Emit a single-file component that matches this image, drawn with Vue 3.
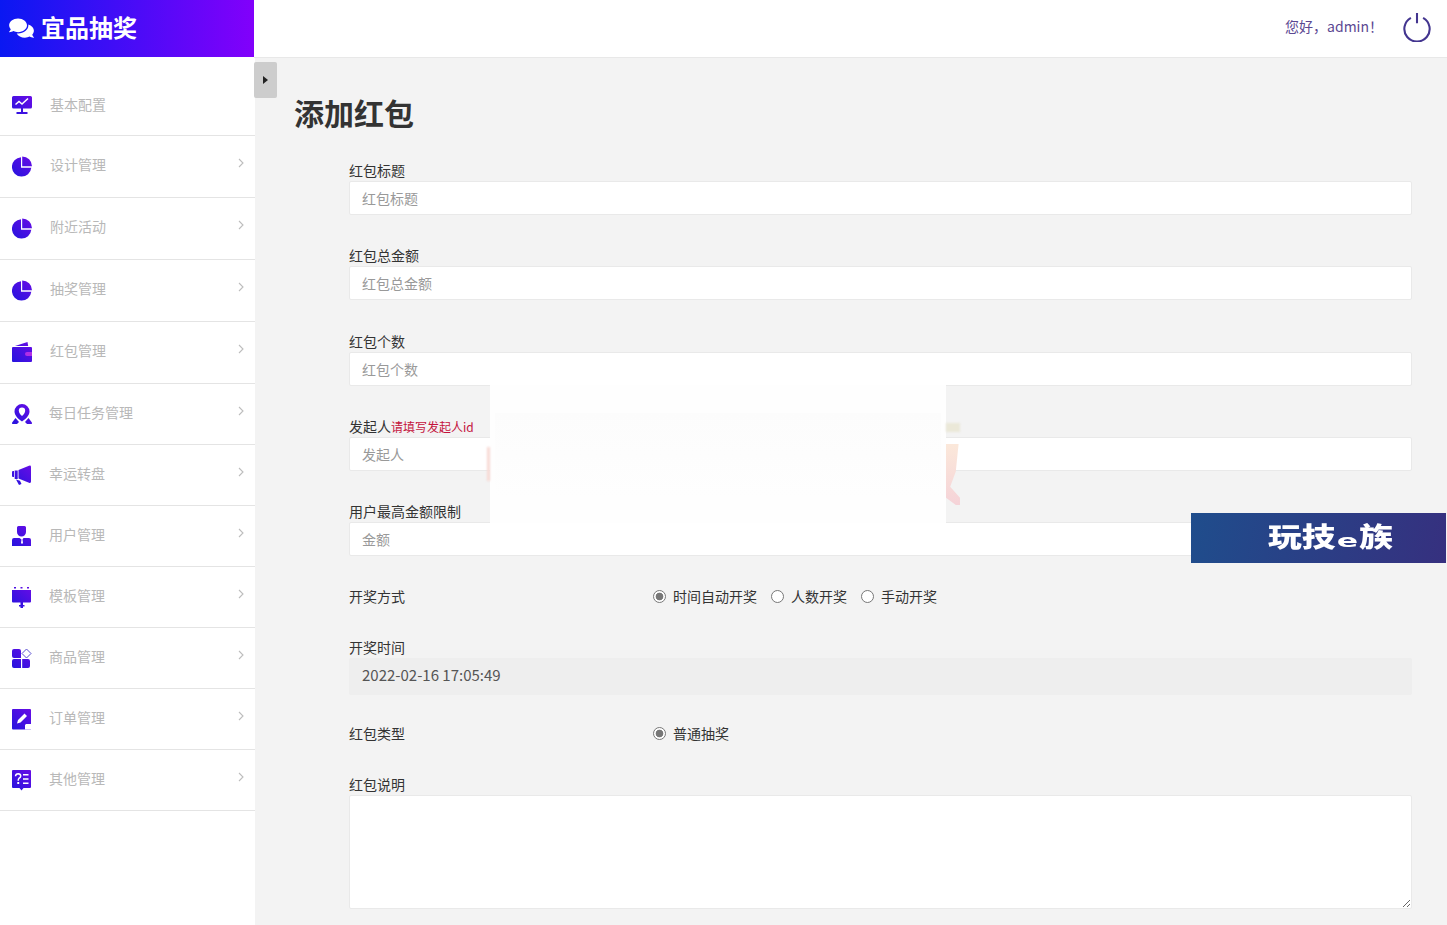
<script setup>
const menu = [
  { name: '基本配置', icon: 'monitor', arrow: false },
  { name: '设计管理', icon: 'pie', arrow: true },
  { name: '附近活动', icon: 'pie', arrow: true },
  { name: '抽奖管理', icon: 'pie', arrow: true },
  { name: '红包管理', icon: 'wallet', arrow: true },
  { name: '每日任务管理', icon: 'pin', arrow: true },
  { name: '幸运转盘', icon: 'horn', arrow: true },
  { name: '用户管理', icon: 'user', arrow: true },
  { name: '模板管理', icon: 'board', arrow: true },
  { name: '商品管理', icon: 'apps', arrow: true },
  { name: '订单管理', icon: 'edit', arrow: true },
  { name: '其他管理', icon: 'list', arrow: true }
]
const icons = {
  monitor: {
    fill: 'M1.500 0h17A1.500 1.500 0 0 1 20 1.500v9.500a1.500 1.500 0 0 1-1.500 1.500h-17A1.500 1.500 0 0 1 0 11V1.500A1.500 1.500 0 0 1 1.500 0zM9 12.500h2V16h4.500v2h-11v-2H9z',
    line: 'M3.500 8.500 7 5.500l3 2.500 6-5.500'
  },
  pie: {
    fill: 'M9 1.200A9.700 9.700 0 1 0 19.300 11.800H9zM10.200 .5a9.800 9.800 0 0 1 9.800 9.800h-9.800z'
  },
  wallet: {
    fill: 'M1 5h18a1 1 0 0 1 1 1v13a1 1 0 0 1-1 1H1a1 1 0 0 1-1-1V6a1 1 0 0 1 1-1zM3 4 15.500 0l.7 4z',
    accent: 'M15 10h5v4h-5a2 2 0 0 1 0-4z'
  },
  pin: {
    fill: 'M10 0a7.500 7.500 0 0 1 7.500 7.500c0 4-4 7.700-7.500 10-3.500-2.300-7.500-6-7.500-10A7.500 7.500 0 0 1 10 0zM3.500 14l3.500 4-2 2H1.500Q-1 20 .5 18zM16.500 14 13 18l2 2h3.500q2.500 0 1-2z',
    white: 'M10 3.500a3.200 3.200 0 0 1 3.200 3.200c0 2-1.800 4-3.200 5.300-1.400-1.300-3.200-3.300-3.200-5.300A3.200 3.200 0 0 1 10 3.500z'
  },
  horn: {
    fill: 'M6.500 5 17 .8Q19 0 19 2v14.500q0 2-2 1.200L6.500 13.500zM0 7q0-1 1-1h1v6H1q-1 0-1-1zM2.700 5.500h3v8.500h-3zM4 14.500l4 1.300 1.500 3.200-2.500 1z'
  },
  user: {
    fill: 'M6.500 0h6A1.500 1.500 0 0 1 14 1.500V6a4.500 4.500 0 0 1-9 0V1.500A1.500 1.500 0 0 1 6.500 0zM2 12h15a2 2 0 0 1 2 2v6H0v-6a2 2 0 0 1 2-2z',
    white: 'M7.500 12h4l-1 1.500.5 3.500-1 1-1-1 .5-3.500z'
  },
  board: {
    fill: 'M2 0h2v1.500H2zM8.500 0h2v1.500h-2zM15 0h2v1.500h-2zM0 3h19v11.500a1 1 0 0 1-1 1H11V18h1.500v1.500H11V21H8.500v-1.500H7V18h1.500v-2.500H1a1 1 0 0 1-1-1z'
  },
  apps: {
    fill: 'M2 1h5a2 2 0 0 1 2 2v7H2a2 2 0 0 1-2-2V3a2 2 0 0 1 2-2zM2 11h7v9H2a2 2 0 0 1-2-2v-5a2 2 0 0 1 2-2zM10.200 11H16a2 2 0 0 1 2 2v5a2 2 0 0 1-2 2h-5.800z',
    stroke: 'M14.500 1 19 5.500 14.500 10 10 5.500z'
  },
  edit: {
    fill: 'M1 0h17a1 1 0 0 1 1 1v19.500H1a1 1 0 0 1-1-1V1a1 1 0 0 1 1-1z',
    white: 'M12.500 4.500 15 7l-6.500 6.500-3.500 1 1-3.500zM14 15h5v5.500h-6V16zM15 16.500h3v1h-2v2h-1z'
  },
  list: {
    fill: 'M1 0h17a1 1 0 0 1 1 1v16a1 1 0 0 1-1 1h-6.500l-2 2.500-2-2.500H1a1 1 0 0 1-1-1V1a1 1 0 0 1 1-1z',
    white: 'M11 4h5.500v1.500H11zM11 8.200h5.500v1.500H11zM11 12.500h5.500V14H11zM5.300 12h1.900v2H5.300z',
    line: 'M3.500 6.200Q3.700 3.700 6.200 3.700 8.700 3.800 8.700 6 8.700 7.500 7 8.300 6.200 8.800 6.200 10.800'
  }
}
const fields = [
  { label: '红包标题', placeholder: '红包标题' },
  { label: '红包总金额', placeholder: '红包总金额' },
  { label: '红包个数', placeholder: '红包个数' },
  { label: '发起人', hint: '请填写发起人id', placeholder: '发起人' },
  { label: '用户最高金额限制', placeholder: '金额' }
]
const drawOptions = [
  { text: '时间自动开奖', on: true },
  { text: '人数开奖', on: false },
  { text: '手动开奖', on: false }
]
</script>

<template>
  <div class="page">
    <aside class="side">
      <div class="brand">
        <svg class="brand-icon" viewBox="0 0 576 512"><path fill="#fff" d="M416 192c0-88.400-93.100-160-208-160S0 103.600 0 192c0 34.300 14.100 65.900 38 92-13.400 30.200-35.500 54.200-35.800 54.500-2.200 2.300-2.800 5.700-1.500 8.700S4.800 352 8 352c36.600 0 66.900-12.300 88.700-25 32.200 15.700 70.300 25 111.300 25 114.900 0 208-71.600 208-160zm122 220c23.900-26 38-57.700 38-92 0-66.900-53.500-124.200-129.300-148.100.9 6.600 1.300 13.300 1.300 20.100 0 105.900-107.700 192-240 192-10.800 0-21.300-.8-31.700-1.900C207.800 439.600 281.800 480 368 480c41 0 79.100-9.200 111.300-25 21.800 12.700 52.100 25 88.700 25 3.200 0 6.100-1.900 7.300-4.800 1.300-2.900.7-6.300-1.500-8.700-.3-.3-22.400-24.200-35.800-54.500z"/></svg>
        <span class="brand-name">宜品抽奖</span>
      </div>
      <ul class="menu">
        <li v-for="(m, i) in menu" :key="m.name" class="item" :class="{ first: i === 0, tight: i > 4 }">
          <svg class="item-icon" viewBox="0 0 20 21">
            <defs>
              <linearGradient :id="'ig' + i" x1="0" y1="21" x2="20" y2="0" gradientUnits="userSpaceOnUse">
                <stop offset="0" stop-color="#2414de" />
                <stop offset="1" stop-color="#6a0ce6" />
              </linearGradient>
            </defs>
            <path :d="icons[m.icon].fill" :fill="'url(#ig' + i + ')'" />
            <path v-if="icons[m.icon].accent" :d="icons[m.icon].accent" fill="#b02fe6" />
            <path v-if="icons[m.icon].white" :d="icons[m.icon].white" fill="#fff" />
            <path v-if="icons[m.icon].line" :d="icons[m.icon].line" fill="none" stroke="#fff" stroke-width="1.500" />
            <path v-if="icons[m.icon].stroke" :d="icons[m.icon].stroke" fill="none" stroke="#5a4fd0" stroke-width="1" />
          </svg>
          <span class="item-name">{{ m.name }}</span>
          <svg v-if="m.arrow" class="chev" viewBox="0 0 6 10"><path d="M1 1l4 4-4 4" fill="none" stroke="#bdbdbd" stroke-width="1.100" /></svg>
        </li>
      </ul>
    </aside>

    <div class="body">
      <header class="top">
        <span class="hello">您好，admin！</span>
        <svg class="power" viewBox="0 0 32 32"><path d="M9.500 6.200a13.500 13.500 0 1 0 13 0M16 1v11" fill="none" stroke="#43358f" stroke-width="2.200" /></svg>
      </header>

      <main class="content">
        <button class="toggle" type="button"><i class="tri"></i></button>
        <h1 class="title">添加红包</h1>
        <form class="form">
          <div v-for="f in fields" :key="f.label" class="group">
            <label class="lab">{{ f.label }}<span v-if="f.hint" class="hint">{{ f.hint }}</span></label>
            <input class="ctl" type="text" :placeholder="f.placeholder" />
          </div>
          <div class="radio-row row-draw">
            <span class="radio-lab">开奖方式</span>
            <label v-for="o in drawOptions" :key="o.text" class="opt">
              <input type="radio" name="draw" class="rad" :checked="o.on" />{{ o.text }}
            </label>
          </div>
          <div class="group">
            <label class="lab">开奖时间</label>
            <input class="ctl ctl-off" type="text" value="2022-02-16 17:05:49" readonly />
          </div>
          <div class="radio-row row-kind">
            <span class="radio-lab">红包类型</span>
            <label class="opt"><input type="radio" name="kind" class="rad" checked />普通抽奖</label>
          </div>
          <div class="group">
            <label class="lab">红包说明</label>
            <textarea class="ctl area"></textarea>
          </div>
        </form>
      </main>
    </div>

    <div class="mask"><i class="ghost-l"></i><i class="ghost-r"></i><i class="ghost-tan"></i><i class="ghost-t"></i></div>
    <div class="banner"><span class="banner-text">玩技<em>e</em>族</span></div>
  </div>
</template>

<style>
html, body { margin: 0; padding: 0; background: #f3f3f3; }
</style>

<style scoped>
.page {
  position: relative;
  display: flex;
  height: 925px;
  overflow: hidden;
  background: #f3f3f3;
  font-family: "Noto Sans CJK SC", "Noto Sans", sans-serif;
  font-size: 14px;
  color: #333;
}
.side { width: 255px; flex: none; background: #fff; }
.brand {
  width: 254px;
  height: 57px;
  box-sizing: border-box;
  padding-left: 9px;
  display: flex;
  align-items: center;
  gap: 7px;
  background: linear-gradient(90deg, #0a18f2, #8200fb);
}
.brand-icon { width: 25px; height: 22px; margin-top: -2px; }
.brand-name { font-size: 24px; font-weight: 700; color: #fff; line-height: 1; margin-top: -4px; }
.menu { list-style: none; margin: 0; padding: 0; }
.item {
  box-sizing: border-box;
  height: 62px;
  display: flex;
  align-items: flex-start;
  padding: 18px 11px 0 12px;
  border-bottom: 1px solid #e4e4e4;
}
.item.first { height: 79px; padding-top: 37px; }
.item.tight { height: 61px; }
.item-icon { width: 20px; height: 21px; flex: none; margin-top: 2px; }
.item-name { margin-left: 18px; line-height: 20px; color: #b8b8b8; white-space: nowrap; }
.item.tight .item-name { margin-left: 17px; }
.chev { width: 6px; height: 10px; margin-left: auto; margin-top: 4px; }
.body { flex: 1; min-width: 0; display: flex; flex-direction: column; }
.top {
  box-sizing: border-box;
  height: 58px;
  flex: none;
  margin-left: -1px;
  background: #fff;
  border-bottom: 1px solid #e8e8e8;
  display: flex;
  align-items: center;
  justify-content: flex-end;
  padding-right: 15px;
}
.hello { color: #5b4892; font-size: 14px; margin: -6px 19px 0 0; white-space: nowrap; }
.power { width: 30px; height: 30px; margin-top: -3px; }
.content { position: relative; flex: 1; padding: 33px 35px 0 39px; }
.toggle {
  position: absolute;
  left: -1px;
  top: 4px;
  width: 23px;
  height: 36px;
  padding: 0;
  border: 0;
  border-radius: 2px;
  background: #cdcdcd;
  display: flex;
  align-items: center;
  justify-content: center;
}
.tri {
  width: 0;
  height: 0;
  border-left: 5px solid #222;
  border-top: 4px solid transparent;
  border-bottom: 4px solid transparent;
}
.title { margin: 0 0 28px; font-size: 30px; line-height: 42px; font-weight: 700; color: #333; }
.form { margin-left: 55px; }
.group { margin-bottom: 31.250px; }
.lab { display: block; height: 20px; line-height: 18px; color: #333; white-space: nowrap; }
.hint { font-size: 12px; color: #c4123c; }
.ctl {
  display: block;
  box-sizing: border-box;
  width: 100%;
  height: 34px;
  padding: 0 12px;
  border: 1px solid #e9e9e9;
  border-radius: 2px;
  background: #fff;
  outline: 0;
  font: inherit;
  color: #555;
}
.ctl::placeholder { color: #999; opacity: 1; }
.ctl-off { height: 37px; padding-bottom: 5px; background: #eee; border-color: #eee; font-size: 15px; }
.area { height: 114px; padding: 6px 12px; }
.radio-row { display: flex; align-items: center; height: 20px; margin-bottom: 31.250px; }
.row-draw { margin-bottom: 31px; }
.row-kind { margin-top: -3px; }
.row-kind .rad { margin-top: 2px; }
.radio-lab { width: 304px; flex: none; margin-top: -2px; }
.opt { display: flex; align-items: center; margin: -2px 14px 0 0; color: #333; white-space: nowrap; }
.rad {
  appearance: none;
  box-sizing: border-box;
  width: 13px;
  height: 13px;
  margin: 0 7px 0 0;
  border: 1px solid #777;
  border-radius: 50%;
  background: #fff;
  flex: none;
}
.rad:checked { background: radial-gradient(circle, #777 0 3.500px, #fff 4.200px); }
.mask {
  position: absolute;
  left: 490px;
  top: 385px;
  width: 456px;
  height: 138px;
  background: #fefefe;
}
.ghost-l {
  position: absolute;
  left: -3px;
  top: 62px;
  width: 3px;
  height: 34px;
  background: #f7d9d4;
  filter: blur(1px);
}
.ghost-r {
  position: absolute;
  right: -14px;
  top: 59px;
  width: 14px;
  height: 61px;
  background: linear-gradient(180deg, #fbe8da, #f5d3d8);
  clip-path: polygon(0 0, 90% 0, 70% 45%, 30% 70%, 100% 88%, 100% 100%, 70% 100%, 0 88%);
}
.ghost-tan {
  position: absolute;
  right: -14px;
  top: 38px;
  width: 14px;
  height: 9px;
  background: #ebe8d8;
  filter: blur(1px);
}
.ghost-t {
  position: absolute;
  left: 5px;
  right: 5px;
  top: 28px;
  height: 85px;
  background: linear-gradient(180deg, #fcfcfc, #fefefe);
}
.banner {
  position: absolute;
  left: 1191px;
  top: 513px;
  width: 255px;
  height: 50px;
  background: linear-gradient(100deg, #1f4d8c, #36307f);
  color: #fff;
  display: flex;
  align-items: center;
  padding: 0 0 4px 77px;
  box-sizing: border-box;
}
.banner-text {
  display: inline-block;
  font-size: 27px;
  font-weight: 900;
  line-height: 1;
  white-space: nowrap;
  transform: scaleX(1.250);
  transform-origin: left center;
}
.banner-text em {
  display: inline-block;
  width: 19px;
  text-align: center;
  font-style: normal;
  font-size: 18px;
  font-family: "DejaVu Sans", sans-serif;
  font-weight: 700;
  transform: scaleX(1.400);
}
</style>
